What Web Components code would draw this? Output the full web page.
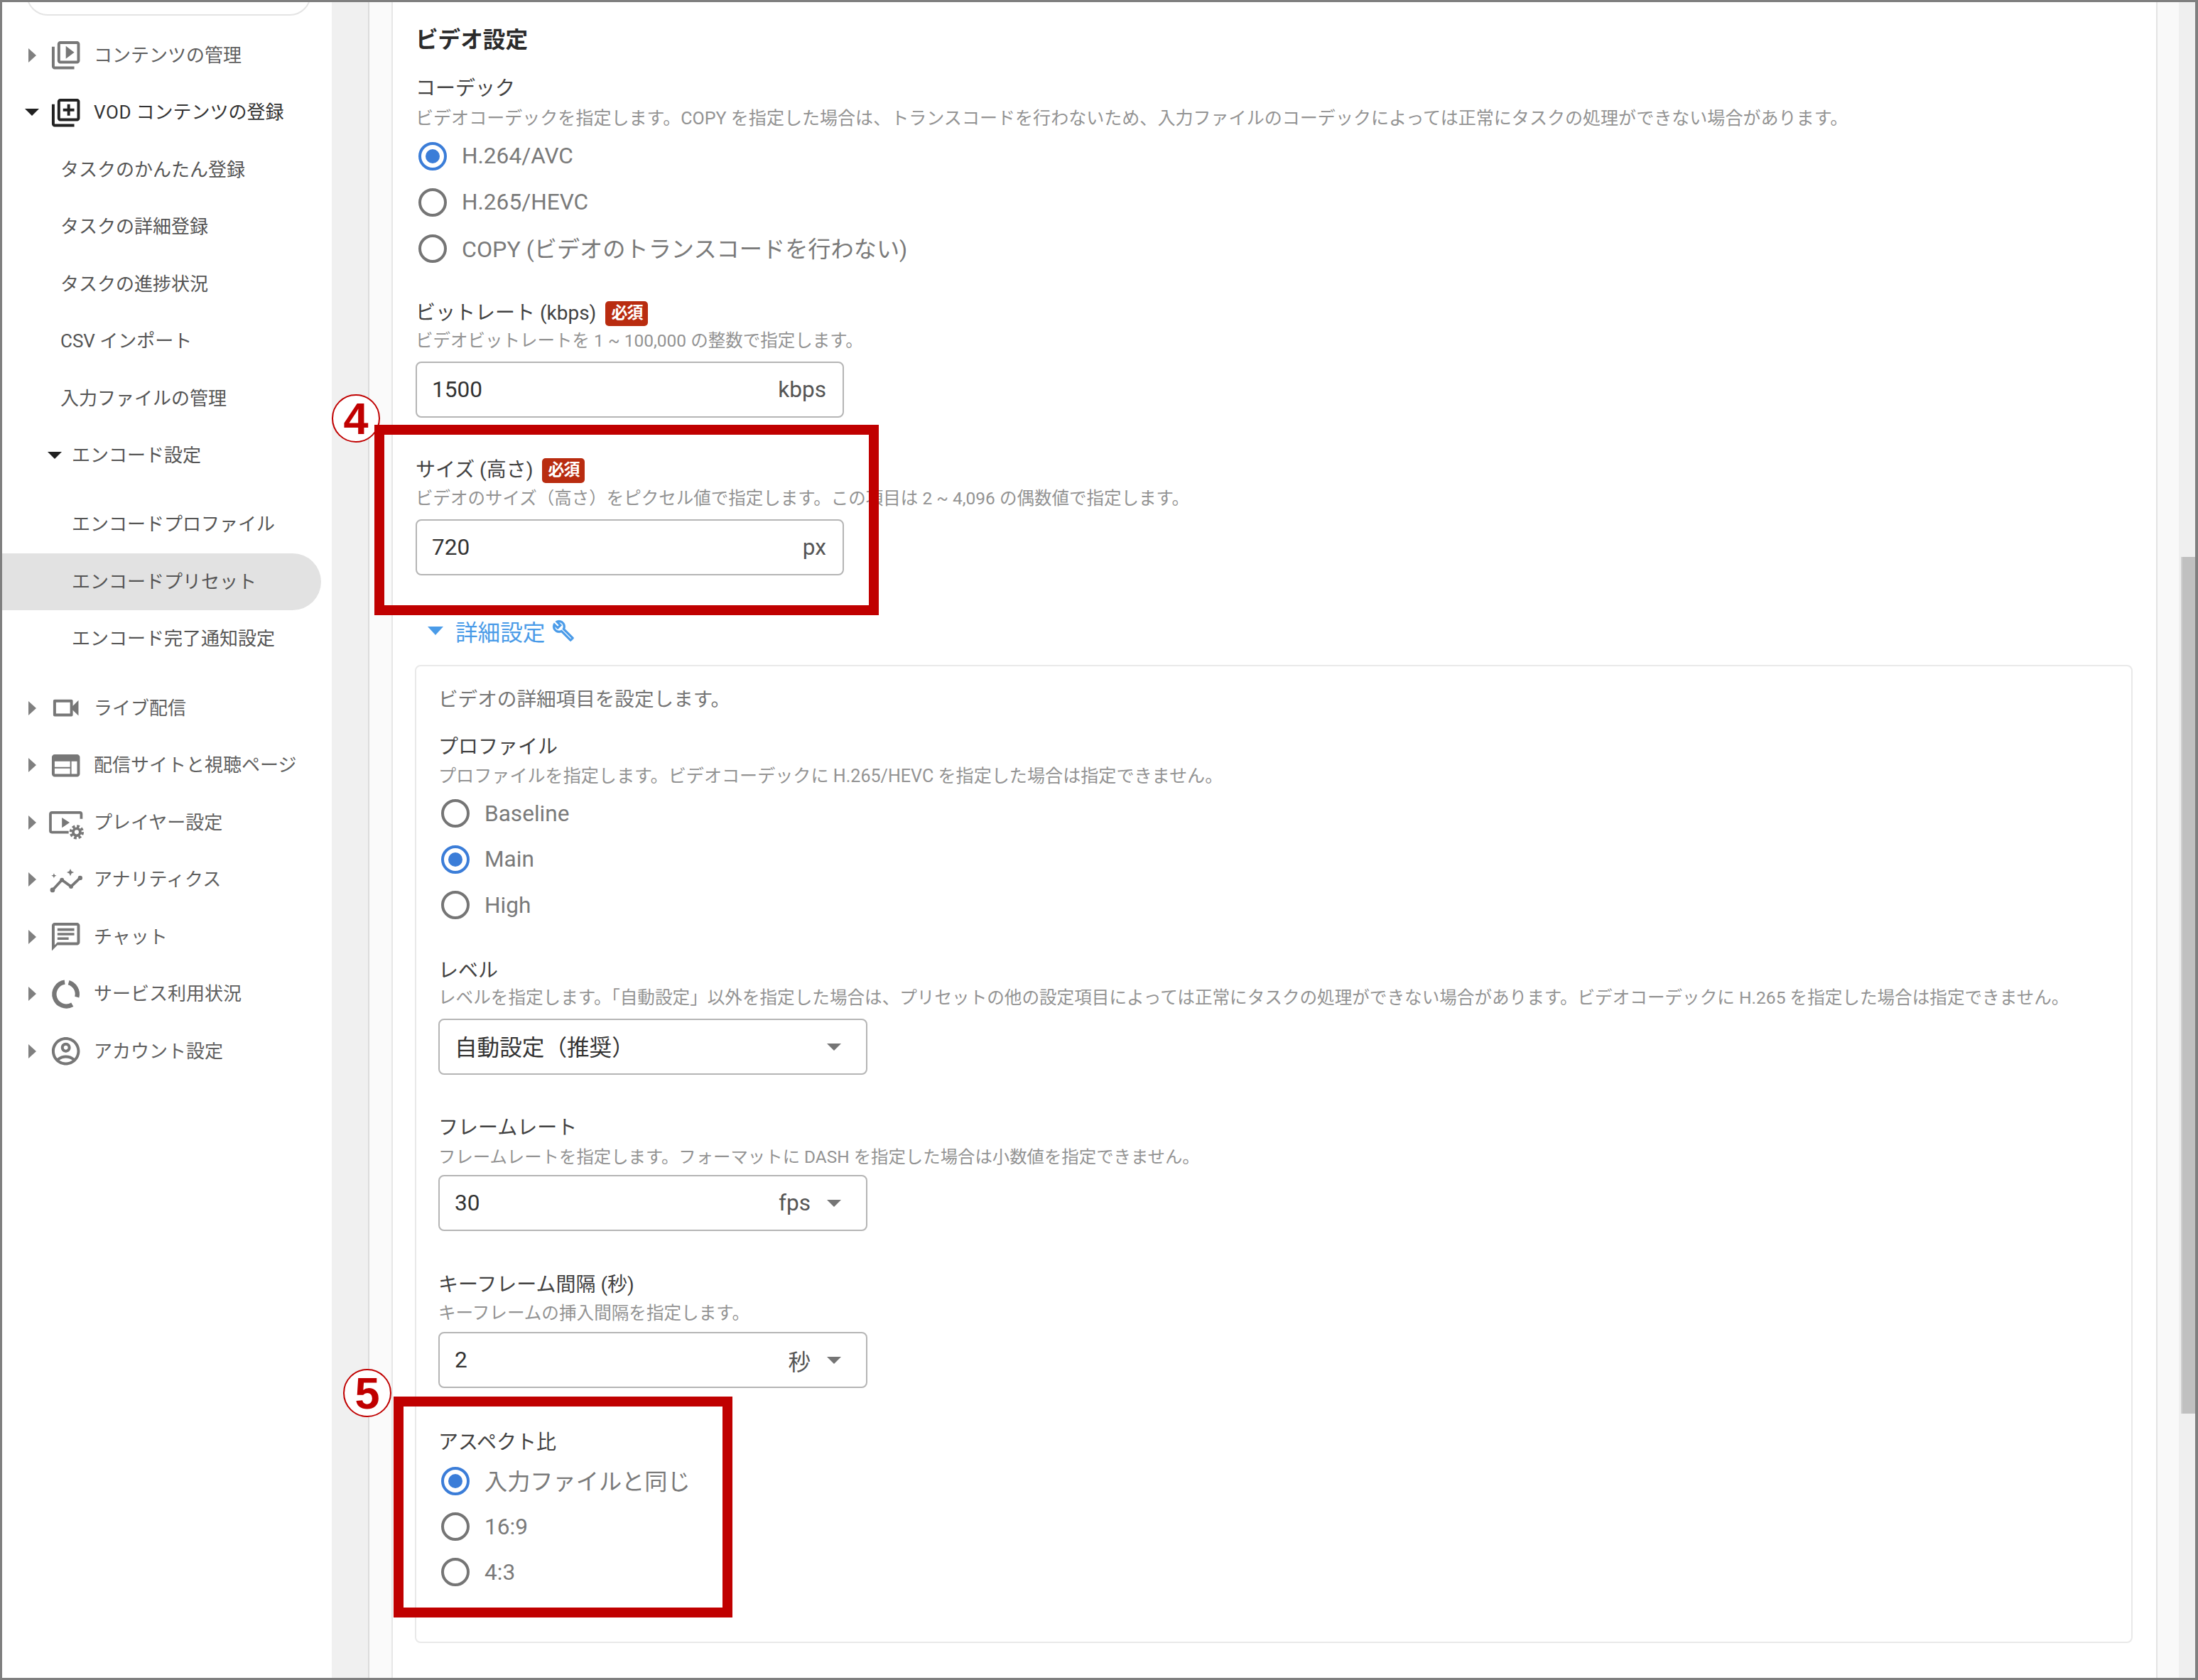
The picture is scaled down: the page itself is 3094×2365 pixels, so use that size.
<!DOCTYPE html>
<html lang="ja">
<head>
<meta charset="utf-8">
<title>ビデオ設定</title>
<style>
  html,body{margin:0;padding:0;background:#fff}
  body{font-family:Roboto,"Noto Sans CJK JP",sans-serif}
</style>
</head>
<body>
<app-frame>
  <side-nav slot="nav">
    <nav-item icon="library" arrow="right">コンテンツの管理</nav-item>
    <nav-item icon="add" arrow="down" strong><span style="letter-spacing:.6px">VOD</span> コンテンツの登録</nav-item>
    <nav-item level="1">タスクのかんたん登録</nav-item>
    <nav-item level="1">タスクの詳細登録</nav-item>
    <nav-item level="1">タスクの進捗状況</nav-item>
    <nav-item level="1">CSV インポート</nav-item>
    <nav-item level="1">入力ファイルの管理</nav-item>
    <nav-item level="2" arrow="down">エンコード設定</nav-item>
    <nav-item level="2" style="--t:16.5px">エンコードプロファイル</nav-item>
    <nav-item level="2" active>エンコードプリセット</nav-item>
    <nav-item level="2">エンコード完了通知設定</nav-item>
    <nav-item icon="cam" arrow="right" style="--t:17px">ライブ配信</nav-item>
    <nav-item icon="web" arrow="right">配信サイトと視聴ページ</nav-item>
    <nav-item icon="player" arrow="right">プレイヤー設定</nav-item>
    <nav-item icon="graph" arrow="right">アナリティクス</nav-item>
    <nav-item icon="chat" arrow="right">チャット</nav-item>
    <nav-item icon="donut" arrow="right">サービス利用状況</nav-item>
    <nav-item icon="account" arrow="right">アカウント設定</nav-item>
  </side-nav>

  <content-card>
    <section-title>ビデオ設定</section-title>

    <form-field label="コーデック" desc="ビデオコーデックを指定します。COPY を指定した場合は、トランスコードを行わないため、入力ファイルのコーデックによっては正常にタスクの処理ができない場合があります。" style="--t:31px;--d:10px;--c:5px;--f:25.05px">
      <radio-item checked>H.264/AVC</radio-item>
      <radio-item>H.265/HEVC</radio-item>
      <radio-item style="--fs:32.2px;--lift:3px">COPY (ビデオのトランスコードを行わない)</radio-item>
    </form-field>

    <form-field label="ビットレート (kbps)" required desc="ビデオビットレートを 1 ~ 100,000 の整数で指定します。" style="--t:42px;--d:7px;--c:14px;--f:24.5px">
      <text-box value="1500" unit="kbps" style="width:603px"></text-box>
    </form-field>

    <form-field label="サイズ (高さ)" required desc="ビデオのサイズ（高さ）をピクセル値で指定します。この項目は 2 ~ 4,096 の偶数値で指定します。" style="--t:57px;--d:8px;--c:14px;--f:24.5px">
      <text-box value="720" unit="px" style="width:603px"></text-box>
    </form-field>

    <detail-toggle style="--t:58px">詳細設定</detail-toggle>

    <detail-panel>
      <form-field label="プロファイル" desc="プロファイルを指定します。ビデオコーデックに H.265/HEVC を指定した場合は指定できません。" style="--t:32px;--d:9px;--c:5px;--f:25.1px">
        <radio-item style="--h:64.5px">Baseline</radio-item>
        <radio-item checked style="--h:64.5px">Main</radio-item>
        <radio-item style="--h:64.5px">High</radio-item>
      </form-field>

      <form-field label="レベル" desc="レベルを指定します。「自動設定」以外を指定した場合は、プリセットの他の設定項目によっては正常にタスクの処理ができない場合があります。ビデオコーデックに H.265 を指定した場合は指定できません。" style="--t:43.5px;--d:6px;--c:14px;--f:24.6px">
        <text-box value="自動設定（推奨）" select style="--lift:4px"></text-box>
      </form-field>

      <form-field label="フレームレート" desc="フレームレートを指定します。フォーマットに DASH を指定した場合は小数値を指定できません。" style="--t:58px;--d:9px;--c:10px;--f:24.4px">
        <text-box value="30" unit="fps" select></text-box>
      </form-field>

      <form-field label="キーフレーム間隔 (秒)" desc="キーフレームの挿入間隔を指定します。" style="--t:59px;--d:8px;--c:11px;--f:24.6px">
        <text-box value="2" unit="秒" select></text-box>
      </form-field>

      <form-field label="アスペクト比" style="--t:60px;--d:0px;--c:5px">
        <radio-item checked style="--h:64px;--fs:32.2px;--lift:5px">入力ファイルと同じ</radio-item>
        <radio-item style="--h:64px">16:9</radio-item>
        <radio-item style="--h:64px">4:3</radio-item>
      </form-field>
    </detail-panel>
  </content-card>

  <scroll-bar slot="scroll"></scroll-bar>

  <!-- annotations drawn over the screenshot -->
  <note-mark slot="over" style="left:464px;top:552px;--s:68px">4</note-mark>
  <note-box slot="over" style="left:524px;top:595px;width:710px;height:268px"></note-box>
  <note-mark slot="over" style="left:480px;top:1924px;--s:68px">5</note-mark>
  <note-box slot="over" style="left:551px;top:1963px;width:477px;height:311px"></note-box>
</app-frame>

<script>
(() => {
  const FONT = 'Roboto,"Noto Sans CJK JP",sans-serif';

  // Material-ish icons, all on a 24 box.
  const ICONS = {
    library: '<path d="M4 6H2v14c0 1.1.9 2 2 2h14v-2H4V6zm16-4H8c-1.1 0-2 .9-2 2v12c0 1.1.9 2 2 2h12c1.1 0 2-.9 2-2V4c0-1.1-.9-2-2-2zm0 14H8V4h12v12zM12 5.5v9l6-4.5z"/>',
    add: '<path d="M4 6H2v14c0 1.1.9 2 2 2h14v-2H4V6zm16-4H8c-1.1 0-2 .9-2 2v12c0 1.1.9 2 2 2h12c1.1 0 2-.9 2-2V4c0-1.1-.9-2-2-2zm0 14H8V4h12v12zm-7-2h2v-3h3V9h-3V6h-2v3h-3v2h3z"/>',
    cam: '<path d="M15 8v8H5V8h10m1-2H4c-.55 0-1 .45-1 1v10c0 .55.45 1 1 1h12c.55 0 1-.45 1-1v-3.5l4 4v-11l-4 4V7c0-.55-.45-1-1-1z"/>',
    web: '<path d="M20 4H4c-1.1 0-1.99.9-1.99 2L2 18c0 1.1.9 2 2 2h16c1.1 0 2-.9 2-2V6c0-1.1-.9-2-2-2zm-5 14H4v-4h11v4zm0-5H4V9h11v4zm5 5h-4V9h4v9z"/>',
    player: '<path d="M23 9.5V6a1 1 0 0 0-1-1H2a1 1 0 0 0-1 1v12a1 1 0 0 0 1 1h12" fill="none" stroke="currentColor" stroke-width="1.9"/><path d="M9.2 8.6v7.2l5.5-3.6z"/><g fill="none" stroke="currentColor" transform="translate(19.7 18.9)"><circle r="2.5" stroke-width="1.9"/><circle r="4.2" stroke-width="1.9" stroke-dasharray="1.9 1.4"/></g>',
    graph: '<path d="M2.5 19.2 9.2 12l6.5 4.7 6.5-6.1" fill="none" stroke="currentColor" stroke-width="1.9"/><circle cx="2.5" cy="19.2" r="1.7"/><circle cx="9.2" cy="12" r="1.5"/><circle cx="15.7" cy="16.7" r="1.5"/><circle cx="22.2" cy="10.6" r="1.6"/><path d="M3.5 7.2l.5 1.3 1.3.5-1.3.5-.5 1.3-.5-1.3-1.3-.5 1.3-.5zM15.2 4l.8 1.8 1.8.8-1.8.8-.8 1.8-.8-1.8-1.8-.8 1.8-.8z"/>',
    chat: '<path d="M20 2H4c-1.1 0-2 .9-2 2v18l4-4h14c1.1 0 2-.9 2-2V4c0-1.1-.9-2-2-2zm0 14H6l-2 2V4h16v12z"/><path d="M6 6h12v1.8H6zm0 3.2h12V11H6zm0 3.2h8v1.8H6z"/>',
    donut: '<g fill="none" stroke="currentColor" stroke-width="3.2"><path d="M16.6 19.4A8.6 8.6 0 1 1 11.2 3.4"/><path d="M14 3.6a8.6 8.6 0 0 1 5.9 10.4"/></g>',
    account: '<path d="M12 2C6.48 2 2 6.48 2 12s4.48 10 10 10 10-4.48 10-10S17.52 2 12 2zM7.35 18.5C8.66 17.56 10.26 17 12 17s3.34.56 4.65 1.5c-1.31.94-2.91 1.5-4.65 1.5s-3.34-.56-4.65-1.5zm10.79-1.38C16.45 15.8 14.32 15 12 15s-4.45.8-6.14 2.12C4.7 15.73 4 13.95 4 12c0-4.42 3.58-8 8-8s8 3.58 8 8c0 1.95-.7 3.73-1.86 5.12zM12 6c-1.93 0-3.5 1.57-3.5 3.5S10.07 13 12 13s3.5-1.57 3.5-3.5S13.93 6 12 6zm0 5c-.83 0-1.5-.67-1.5-1.5S11.17 8 12 8s1.5.67 1.5 1.5S12.83 11 12 11z"/>'
  };
  const WRENCH = '<path d="M22.61 18.99l-9.08-9.08c.93-2.34.45-5.1-1.44-7C9.79.61 6.21.4 3.66 2.26L7.5 6.11 6.08 7.52 2.25 3.69C.39 6.23.6 9.82 2.9 12.11c1.86 1.86 4.57 2.35 6.89 1.48l9.11 9.11c.39.39 1.02.39 1.41 0l2.3-2.3c.4-.38.4-1.01 0-1.41zm-3 1.6l-9.46-9.46c-.61.45-1.29.72-2 .82-1.36.2-2.79-.21-3.83-1.25C3.37 9.76 2.93 8.5 3 7.26l3.09 3.09 4.24-4.24-3.09-3.09c1.24-.07 2.49.37 3.44 1.31 1.08 1.08 1.49 2.57 1.24 3.96-.12.71-.42 1.37-.88 1.96l9.45 9.45-.88.89z"/>';

  // Small helper: a class whose shadow root gets css + whatever html() returns.
  const define = (name, css, html) => {
    customElements.define(name, class extends HTMLElement {
      connectedCallback() {
        if (this.shadowRoot) return;
        this.attachShadow({ mode: 'open' }).innerHTML =
          '<style>' + css + '</style>' + (html ? html(this) : '<slot></slot>');
      }
    });
  };

  define('app-frame', `
    :host{display:block;position:relative;box-sizing:border-box;width:3094px;height:2365px;overflow:hidden;
      border:3px solid #7f7f7f;border-right-width:4px;background:#fff;font-family:${FONT}}
    .grid{display:grid;grid-template-columns:464px 84px 1fr 30px 23px;height:100%}
    .gl{background:#f0f0f0;padding-left:51px}
    .gl i{display:block;box-sizing:border-box;height:100%;border-left:2px solid #dcdcdc;background:#fafafa}
    .gr{background:#f9f9f9}
  `, () => `
    <div class="grid">
      <slot name="nav"></slot>
      <div class="gl"><i></i></div>
      <slot></slot>
      <div class="gr"></div>
      <slot name="scroll"></slot>
    </div>
    <slot name="over"></slot>
  `);

  define('side-nav', `
    :host{display:block;background:#fff;overflow:hidden}
    .search{box-sizing:border-box;height:60px;margin:-41px 29px 0 34px;border:2px solid #e4e4e4;border-radius:40px}
    .list{margin-top:15.5px}
  `, () => `<div class="search"></div><div class="list"><slot></slot></div>`);

  define('nav-item', `
    :host{display:block;margin-top:var(--t,0);height:80.5px;font-size:26px;color:#5f5f5f}
    :host([level]){color:#555}
    :host([strong]){color:#333}
    :host([active]) .row{background:#e2e2e2;border-radius:0 40px 40px 0;margin-right:15px}
    .row{display:flex;align-items:center;height:100%;line-height:40px}
    .arrow{flex:none;width:0;height:0}
    .right{margin-left:37px;border-style:solid;border-width:10px 0 10px 11px;border-color:transparent transparent transparent #808080}
    .down{margin-left:32px;border-style:solid;border-width:10px 10px 0;border-color:#212121 transparent transparent}
    svg{flex:none;width:47.4px;height:47.4px;fill:currentColor;overflow:visible}
    .ic{display:flex;width:63px;margin-left:18px;color:#777}
    .down + .ic{margin-left:14px}
    :host([strong]) .ic{color:#222}
    :host([level="1"]) .t{margin-left:82px}
    :host([level="2"]) .t{margin-left:98px}
    :host([level="2"]) .down{margin-left:64px}
    :host([level="2"]) .down + .t{margin-left:14px}
    .t{white-space:nowrap}
  `, el => {
    const a = el.getAttribute('arrow');
    const ic = el.getAttribute('icon');
    return `<div class="row">` +
      (a ? `<span class="arrow ${a}"></span>` : '') +
      (ic ? `<span class="ic"><svg viewBox="0 0 24 24">${ICONS[ic]}</svg></span>` : '') +
      `<span class="t"><slot></slot></span></div>`;
  });

  define('content-card', `
    :host{display:block;box-sizing:border-box;min-width:0;background:#fff;padding:34px 33px 0 32px;
      border-left:2px solid #e6e6e6;border-right:2px solid #e4e4e4}
  `);

  define('section-title', `
    :host{display:block;font-size:31.6px;font-weight:700;line-height:40px;color:#2b2b2b}
  `);

  define('form-field', `
    :host{display:block;margin-top:var(--t,0)}
    .l{display:flex;align-items:center;height:34px;font-size:28px;line-height:34px;color:#424242;white-space:nowrap}
    .req{display:flex;align-items:center;justify-content:center;flex:none;box-sizing:border-box;width:60px;height:35px;margin-left:13px;
      border-radius:5px;background:#b92c10;color:#fff;font-size:23px;font-weight:700;letter-spacing:-1px}
    .d{margin-top:var(--d,8px);font-size:var(--f,24.5px);line-height:30px;color:#939393;white-space:nowrap}
    .c{margin-top:var(--c,14px)}
  `, el => `
    <div class="l">${el.getAttribute('label')}${el.hasAttribute('required') ? '<span class="req">必須</span>' : ''}</div>
    ${el.hasAttribute('desc') ? `<div class="d">${el.getAttribute('desc')}</div>` : ''}
    <div class="c"><slot></slot></div>
  `);

  define('radio-item', `
    :host{display:flex;align-items:center;height:var(--h,65px);font-size:var(--fs,31.6px);color:#7a7a7a;white-space:nowrap}
    .o{flex:none;box-sizing:border-box;width:40px;height:40px;margin:0 21px 0 4px;border:4px solid #757575;border-radius:50%}
    .t{padding-bottom:var(--lift,0)}
    :host([checked]) .o{border-color:#3b7dd8;padding:6px}
    :host([checked]) .o::after{content:"";display:block;width:20px;height:20px;border-radius:50%;background:#3b7dd8}
  `, () => `<span class="o"></span><span class="t"><slot></slot></span>`);

  define('text-box', `
    :host{display:flex;align-items:center;box-sizing:border-box;width:604px;height:79px;padding:0 23px 0 21px;
      border:2px solid #b5b5b5;border-radius:8px;background:#fff;font-size:31.6px;color:#333;white-space:nowrap}
    .v{flex:1;padding-bottom:var(--lift,0)}
    .u{color:#555}
    .a{flex:none;width:0;height:0;margin:0 12px 0 23px;border-style:solid;border-width:10px 10px 0;border-color:#757575 transparent transparent}
  `, el => `
    <span class="v">${el.getAttribute('value')}</span>
    ${el.hasAttribute('unit') ? `<span class="u">${el.getAttribute('unit')}</span>` : ''}
    ${el.hasAttribute('select') ? '<span class="a"></span>' : ''}
  `);

  define('detail-toggle', `
    :host{display:flex;align-items:center;height:40px;margin-top:var(--t,0);padding-left:17px;
      font-size:31.6px;color:#4a9be8;white-space:nowrap}
    .a{flex:none;width:0;height:0;margin-right:17px;border-style:solid;border-width:12px 11px 0;border-color:#4a9be8 transparent transparent}
    svg{flex:none;width:32px;height:32px;margin-left:10px;fill:#4a9be8;stroke:#4a9be8;stroke-width:.5}
  `, () => `<span class="a"></span><slot></slot><svg viewBox="0 0 24 24">${WRENCH}</svg>`);

  define('detail-panel', `
    :host{display:block;box-sizing:border-box;height:1377px;margin:28px 0 0 -1px;padding:29px 31px 0;
      border:2px solid #e9e9e9;border-radius:8px}
    .h{font-size:27.6px;line-height:36px;color:#757575}
  `, () => `<div class="h">ビデオの詳細項目を設定します。</div><slot></slot>`);

  define('scroll-bar', `
    :host{display:block;background:#efefef;padding:781px 0 0 3px}
    .t{height:1206px;background:#c0c0c0;border-left:2px solid #d0d0d0}
  `, () => `<div class="t"></div>`);

  define('note-box', `
    :host{display:block;position:absolute;box-sizing:border-box;border:14px solid #c00000}
  `, () => '');

  define('note-mark', `
    :host{display:flex;align-items:center;justify-content:center;position:absolute;box-sizing:border-box;
      width:var(--s);height:var(--s);border:2.5px solid #c00000;border-radius:50%;background:#fff;
      font-family:"Liberation Sans",sans-serif;font-weight:700;font-size:63px;line-height:1;color:#c00000}
  `);
})();
</script>
</body>
</html>
